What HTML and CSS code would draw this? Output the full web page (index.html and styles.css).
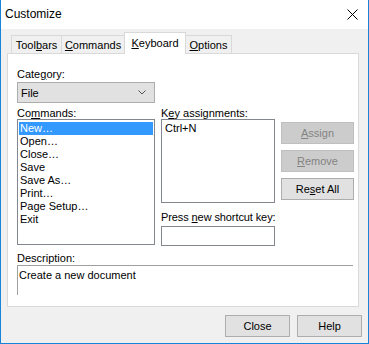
FILE: index.html
```html
<!DOCTYPE html>
<html>
<head>
<meta charset="utf-8">
<link rel="stylesheet" href="styles.css">
</head>
<body>
<div class="window">
  <div class="titlebar">
    <span class="title">Customize</span>
    <svg class="close-x" width="11" height="11" viewBox="0 0 11 11"><path d="M0.5 0.5L10.5 10.5M10.5 0.5L0.5 10.5" stroke="#000" stroke-width="1" fill="none"/></svg>
  </div>
  <div class="body">
    <div class="tabs">
      <div class="tab t1">Tool<u>b</u>ars</div>
      <div class="tab t2"><u>C</u>ommands</div>
      <div class="tab t3 selected"><u>K</u>eyboard</div>
      <div class="tab t4"><u>O</u>ptions</div>
    </div>
    <div class="panel">
      <div class="label cat-label">Cate<u>g</u>ory:</div>
      <div class="combo">
        <span>File</span>
        <svg class="chev" width="8" height="5" viewBox="0 0 8 5"><path d="M0.5 0.5L4 4L7.5 0.5" stroke="#555" stroke-width="1" fill="none"/></svg>
      </div>
      <div class="grid">
        <div class="col">
          <div class="label col-label">Co<u>m</u>mands:</div>
          <div class="listbox commands">
            <div class="item sel">New…</div>
            <div class="item">Open…</div>
            <div class="item">Close…</div>
            <div class="item">Save</div>
            <div class="item">Save As…</div>
            <div class="item">Print…</div>
            <div class="item">Page Setup…</div>
            <div class="item">Exit</div>
          </div>
        </div>
        <div class="col">
          <div class="label col-label">K<u>e</u>y assignments:</div>
          <div class="listbox keys">
            <div class="item">Ctrl+N</div>
          </div>
          <div class="label press-label">Press <u>n</u>ew shortcut key:</div>
          <div class="textbox"></div>
        </div>
        <div class="col buttons">
          <div class="btn disabled"><u>A</u>ssign</div>
          <div class="btn disabled"><u>R</u>emove</div>
          <div class="btn">Re<u>s</u>et All</div>
        </div>
      </div>
      <div class="label desc-label">Description:</div>
      <div class="desc">Create a new document</div>
    </div>
    <div class="footer">
      <div class="btn foot">Close</div>
      <div class="btn foot">Help</div>
    </div>
  </div>
</div>
</body>
</html>
```

FILE: styles.css
```css
* { box-sizing: border-box; }
html, body { margin: 0; padding: 0; }
body {
  font-family: "Liberation Sans", Arial, sans-serif;
  font-size: 11px;
  color: #000;
  background: #f0f0f0;
}
u { text-decoration: underline; text-underline-offset: 1px; }
.window {
  width: 369px;
  height: 344px;
  border: 1px solid #1883d7;
  border-top: none;
  background: #f0f0f0;
  display: flex;
  flex-direction: column;
}
.titlebar {
  height: 29px;
  background: #fff;
  display: flex;
  align-items: center;
  justify-content: space-between;
  padding: 0 10px 0 4px;
}
.title { font-size: 12px; padding-bottom: 2px; }
.close-x { margin-top: -1px; }
.body {
  flex: 1;
  display: flex;
  flex-direction: column;
}
.tabs {
  display: flex;
  align-items: flex-end;
  height: 24px;
  padding-left: 10px;
  position: relative;
  z-index: 1;
}
.tab {
  height: 18px;
  border: 1px solid #d9d9d9;
  border-bottom: none;
  background: #f0f0f0;
  padding-top: 2px;
  line-height: 14px;
  text-align: center;
  white-space: nowrap;
  margin-right: -1px;
}
.t1 { width: 51px; }
.t2 { width: 64px; }
.t3 { width: 62px; }
.t4 { width: 47px; }
.tab.selected {
  background: #fff;
  padding-top: 3px;
  margin-bottom: -1px;
  height: 22px;
}
.panel {
  margin: 0 9px 0 6px;
  height: 254px;
  background: #fff;
  border: 1px solid #d9d9d9;
  padding: 11px 0 0 9px;
}
.label { line-height: 14px; white-space: nowrap; }
.cat-label { height: 17px; padding-top: 2px; }
.combo {
  width: 138px;
  height: 21px;
  background: #e1e1e1;
  border: 1px solid #adadad;
  display: flex;
  align-items: center;
  justify-content: space-between;
  padding: 0 8px 0 3px;
}
.grid {
  display: grid;
  grid-template-columns: 138px 114px 73px;
  column-gap: 6px;
  align-items: start;
}
.col { display: flex; flex-direction: column; }
.col-label { height: 16px; padding-top: 3px; }
.listbox {
  border: 1px solid #828790;
  background: #fff;
  padding: 2px 1px;
}
.commands { height: 126px; }
.keys { height: 84px; padding: 2px 2px; }
.item { line-height: 13px; height: 13px; padding-left: 1px; white-space: nowrap; }
.item.sel { background: #3399ff; color: #fff; }
.press-label { height: 23px; padding-top: 7px; letter-spacing: -0.1px; }
.textbox { height: 20px; border: 1px solid #828790; background: #fff; }
.buttons { padding-top: 19px; gap: 6px; }
.btn {
  height: 22px;
  border: 1px solid #adadad;
  background: #e1e1e1;
  display: flex;
  align-items: center;
  justify-content: center;
  white-space: nowrap;
}
.btn.disabled {
  background: #cccccc;
  border-color: #bfbfbf;
  color: #838383;
}
.desc-label { height: 19px; padding-top: 5px; }
.desc {
  width: 336px;
  height: 30px;
  border-top: 1px solid #a0a0a0;
  border-left: 1px solid #a0a0a0;
  padding: 3px 0 0 1px;
  line-height: 13px;
}
.footer {
  display: flex;
  justify-content: flex-end;
  gap: 7px;
  padding: 8px 6px 0 0;
}
.btn.foot { width: 65px; height: 22px; }
```
